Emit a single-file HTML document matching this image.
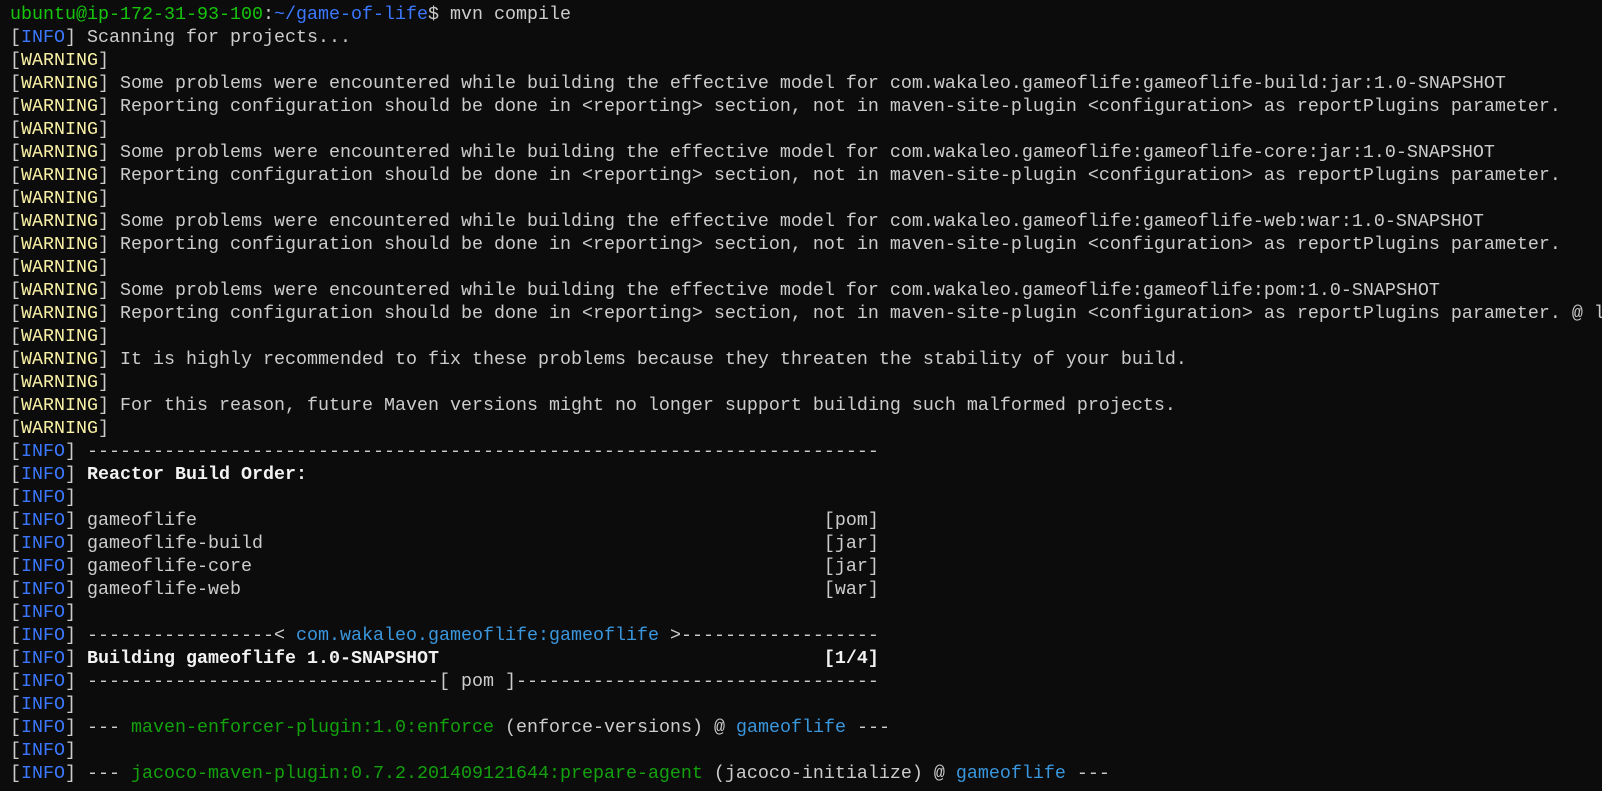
<!DOCTYPE html>
<html><head><meta charset="utf-8"><style>
html,body{margin:0;padding:0;background:#0c0c0c;width:1602px;height:791px;overflow:hidden;position:relative}
div{position:absolute;left:10px;height:23px;font-family:"Liberation Mono",monospace;font-size:18.33px;line-height:23px;color:#cccccc;white-space:pre}
.i{color:#3b78ff}.w{color:#f9f1a5}.g{color:#16c60c}.p{color:#3b78ff}.b{font-weight:bold;color:#f2f2f2}.dg{color:#13a10e}.cb{color:#3a96dd}
</style></head><body>
<div style="top:3px"><span class="g">ubuntu@ip-172-31-93-100</span>:<span class="p">~/game-of-life</span>$ mvn compile</div>
<div style="top:26px">[<span class="i">INFO</span>] Scanning for projects...</div>
<div style="top:49px">[<span class="w">WARNING</span>]</div>
<div style="top:72px">[<span class="w">WARNING</span>] Some problems were encountered while building the effective model for com.wakaleo.gameoflife:gameoflife-build:jar:1.0-SNAPSHOT</div>
<div style="top:95px">[<span class="w">WARNING</span>] Reporting configuration should be done in &lt;reporting&gt; section, not in maven-site-plugin &lt;configuration&gt; as reportPlugins parameter.</div>
<div style="top:118px">[<span class="w">WARNING</span>]</div>
<div style="top:141px">[<span class="w">WARNING</span>] Some problems were encountered while building the effective model for com.wakaleo.gameoflife:gameoflife-core:jar:1.0-SNAPSHOT</div>
<div style="top:164px">[<span class="w">WARNING</span>] Reporting configuration should be done in &lt;reporting&gt; section, not in maven-site-plugin &lt;configuration&gt; as reportPlugins parameter.</div>
<div style="top:187px">[<span class="w">WARNING</span>]</div>
<div style="top:210px">[<span class="w">WARNING</span>] Some problems were encountered while building the effective model for com.wakaleo.gameoflife:gameoflife-web:war:1.0-SNAPSHOT</div>
<div style="top:233px">[<span class="w">WARNING</span>] Reporting configuration should be done in &lt;reporting&gt; section, not in maven-site-plugin &lt;configuration&gt; as reportPlugins parameter.</div>
<div style="top:256px">[<span class="w">WARNING</span>]</div>
<div style="top:279px">[<span class="w">WARNING</span>] Some problems were encountered while building the effective model for com.wakaleo.gameoflife:gameoflife:pom:1.0-SNAPSHOT</div>
<div style="top:302px">[<span class="w">WARNING</span>] Reporting configuration should be done in &lt;reporting&gt; section, not in maven-site-plugin &lt;configuration&gt; as reportPlugins parameter. @ line</div>
<div style="top:325px">[<span class="w">WARNING</span>]</div>
<div style="top:348px">[<span class="w">WARNING</span>] It is highly recommended to fix these problems because they threaten the stability of your build.</div>
<div style="top:371px">[<span class="w">WARNING</span>]</div>
<div style="top:394px">[<span class="w">WARNING</span>] For this reason, future Maven versions might no longer support building such malformed projects.</div>
<div style="top:417px">[<span class="w">WARNING</span>]</div>
<div style="top:440px">[<span class="i">INFO</span>] ------------------------------------------------------------------------</div>
<div style="top:463px">[<span class="i">INFO</span>] <span class="b">Reactor Build Order:</span></div>
<div style="top:486px">[<span class="i">INFO</span>]</div>
<div style="top:509px">[<span class="i">INFO</span>] gameoflife                                                         [pom]</div>
<div style="top:532px">[<span class="i">INFO</span>] gameoflife-build                                                   [jar]</div>
<div style="top:555px">[<span class="i">INFO</span>] gameoflife-core                                                    [jar]</div>
<div style="top:578px">[<span class="i">INFO</span>] gameoflife-web                                                     [war]</div>
<div style="top:601px">[<span class="i">INFO</span>]</div>
<div style="top:624px">[<span class="i">INFO</span>] -----------------&lt; <span class="cb">com.wakaleo.gameoflife:gameoflife</span> &gt;------------------</div>
<div style="top:647px">[<span class="i">INFO</span>] <span class="b">Building gameoflife 1.0-SNAPSHOT                                   [1/4]</span></div>
<div style="top:670px">[<span class="i">INFO</span>] --------------------------------[ pom ]---------------------------------</div>
<div style="top:693px">[<span class="i">INFO</span>]</div>
<div style="top:716px">[<span class="i">INFO</span>] --- <span class="dg">maven-enforcer-plugin:1.0:enforce</span> (enforce-versions) @ <span class="cb">gameoflife</span> ---</div>
<div style="top:739px">[<span class="i">INFO</span>]</div>
<div style="top:762px">[<span class="i">INFO</span>] --- <span class="dg">jacoco-maven-plugin:0.7.2.201409121644:prepare-agent</span> (jacoco-initialize) @ <span class="cb">gameoflife</span> ---</div>
</body></html>
